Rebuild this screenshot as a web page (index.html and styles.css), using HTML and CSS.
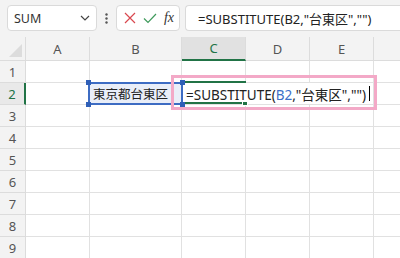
FILE: index.html
```html
<!DOCTYPE html>
<html>
<head>
<meta charset="utf-8">
<link rel="stylesheet" href="styles.css">
</head>
<body>
<div class="toolbar">
  <div class="namebox">
    <span class="name">SUM</span>
    <svg class="chev" width="10" height="6" viewBox="0 0 10 6"><path d="M1 1 L5 5 L9 1" fill="none" stroke="#444" stroke-width="1.2"/></svg>
  </div>
  <div class="dots">
    <svg width="3" height="11" viewBox="0 0 3 11"><circle cx="1.5" cy="1.5" r="1.2" fill="#555"/><circle cx="1.5" cy="5.5" r="1.2" fill="#555"/><circle cx="1.5" cy="9.5" r="1.2" fill="#555"/></svg>
  </div>
  <div class="fxbox">
    <svg width="12" height="12" viewBox="0 0 12 12"><path d="M1 1 L11 11 M11 1 L1 11" stroke="#d9484f" stroke-width="1.2" fill="none"/></svg>
    <svg width="14" height="11" viewBox="0 0 14 11"><path d="M1 5.5 L5 9.5 L13 1" stroke="#3f9a5c" stroke-width="1.2" fill="none"/></svg>
    <span class="fx">fx</span>
  </div>
  <div class="formula">=SUBSTITUTE(B2,"台東区","")</div>
</div>
<div class="sheet">
  <div class="corner"><span class="tri"></span></div>
  <div class="ch">A</div>
  <div class="ch">B</div>
  <div class="ch sel">C</div>
  <div class="ch">D</div>
  <div class="ch">E</div>
  <div class="ch last"></div>

  <div class="rh">1</div><div class="c"></div><div class="c"></div><div class="c"></div><div class="c"></div><div class="c"></div><div class="c last"></div>
  <div class="rh sel">2</div><div class="c"></div><div class="c b2">東京都台東区</div><div class="c c2"><span class="ftxt">=SUBSTITUTE(<span class="ref">B2</span>,"台東区","")</span><span class="caret"></span><span class="active"><span class="fill"></span></span></div><div class="c last"></div>
  <div class="rh">3</div><div class="c"></div><div class="c"></div><div class="c"></div><div class="c"></div><div class="c"></div><div class="c last"></div>
  <div class="rh">4</div><div class="c"></div><div class="c"></div><div class="c"></div><div class="c"></div><div class="c"></div><div class="c last"></div>
  <div class="rh">5</div><div class="c"></div><div class="c"></div><div class="c"></div><div class="c"></div><div class="c"></div><div class="c last"></div>
  <div class="rh">6</div><div class="c"></div><div class="c"></div><div class="c"></div><div class="c"></div><div class="c"></div><div class="c last"></div>
  <div class="rh">7</div><div class="c"></div><div class="c"></div><div class="c"></div><div class="c"></div><div class="c"></div><div class="c last"></div>
  <div class="rh">8</div><div class="c"></div><div class="c"></div><div class="c"></div><div class="c"></div><div class="c"></div><div class="c last"></div>
  <div class="rh">9</div><div class="c"></div><div class="c"></div><div class="c"></div><div class="c"></div><div class="c"></div><div class="c last"></div>

  <div class="range"><span class="h h1"></span><span class="h h2"></span><span class="h h3"></span><span class="h h4"></span></div>
  <div class="mark"></div>
</div>
</body>
</html>
```

FILE: styles.css
```css
* { box-sizing: border-box; }
html, body { margin: 0; padding: 0; }
body {
  width: 400px;
  height: 258px;
  overflow: hidden;
  background: #fff;
  font-family: "Noto Sans", "Noto Sans CJK JP", sans-serif;
  color: #222;
}
.toolbar {
  height: 37px;
  background: #f3f3f3;
  display: flex;
  align-items: flex-start;
  padding: 5px 0 0 7px;
}
.namebox, .fxbox, .formula {
  height: 26px;
  background: #fff;
  border: 1px solid #dadada;
  border-radius: 4px;
  display: flex;
  align-items: center;
}
.namebox {
  width: 90px;
  padding: 0 6px 0 6px;
  justify-content: space-between;
}
.name { font-size: 12.5px; color: #333; }
.dots {
  width: 19px;
  height: 26px;
  display: flex;
  align-items: center;
  justify-content: center;
}
.fxbox {
  width: 64px;
  padding: 0 5px 0 7px;
  justify-content: space-between;
}
.fx {
  font-family: "Liberation Serif", serif;
  font-style: italic;
  font-size: 14px;
  color: #333;
}
.formula {
  flex: 1;
  margin-left: 5px;
  border-right: none;
  border-radius: 4px 0 0 4px;
  padding-left: 12px;
  font-size: 13px;
  color: #222;
  white-space: nowrap;
}
.sheet {
  position: relative;
  display: grid;
  grid-template-columns: 26px 64px 92px 64px 64px 64px 1fr;
  grid-template-rows: 24px repeat(9, 22px);
}
.corner, .ch, .rh {
  background: #f3f3f3;
  border-right: 1px solid #dcdcdc;
  border-bottom: 1px solid #dcdcdc;
  color: #555;
  font-size: 13px;
  display: flex;
  align-items: center;
  justify-content: center;
}
.corner { position: relative; }
.tri {
  position: absolute;
  right: 3px;
  bottom: 3px;
  width: 0;
  height: 0;
  border-left: 13px solid transparent;
  border-bottom: 13px solid #dcdcdc;
}
.ch.sel {
  background: #e1e1e1;
  color: #217346;
  border-bottom: 2px solid #217346;
}
.ch.last, .c.last { border-right: none; }
.rh.sel {
  color: #217346;
  border-right: 2px solid #217346;
  background: #e9e9e9;
}
.c {
  border-right: 1px solid #e1e1e1;
  border-bottom: 1px solid #e1e1e1;
  font-size: 13px;
  display: flex;
  align-items: center;
  white-space: nowrap;
}
.b2 {
  background: #e9eef8;
  padding-left: 3px;
  font-family: "Noto Sans CJK JP", sans-serif;
  font-size: 12.5px;
}
.c2 {
  grid-column: 4 / 7;
  position: relative;
  padding-left: 4px;
}
.ftxt { font-size: 13.5px; }
.ref { color: #3c6fc8; }
.caret {
  display: inline-block;
  width: 1px;
  height: 15px;
  background: #000;
  margin-left: 3px;
}
.active {
  position: absolute;
  left: -1px;
  top: -2px;
  width: 65px;
  height: 23px;
  border-top: 2px solid #217346;
  border-left: 2px solid #217346;
  border-bottom: 2px solid #217346;
}
.fill {
  position: absolute;
  right: -2px;
  bottom: -4px;
  width: 6px;
  height: 5px;
  background: #217346;
  border: 1px solid #fff;
}
.range {
  position: absolute;
  left: 88px;
  top: 45px;
  width: 95px;
  height: 23px;
  border: 2px solid #3d6cc3;
}
.h {
  position: absolute;
  width: 5px;
  height: 5px;
  background: #2f5fb7;
}
.h1 { left: -4px; top: -4px; }
.h2 { right: -4px; top: -4px; }
.h3 { left: -4px; bottom: -4px; }
.h4 { right: -4px; bottom: -4px; }
.mark {
  position: absolute;
  left: 171px;
  top: 38px;
  width: 206px;
  height: 35px;
  border: 3px solid #f3a9c7;
}
```
